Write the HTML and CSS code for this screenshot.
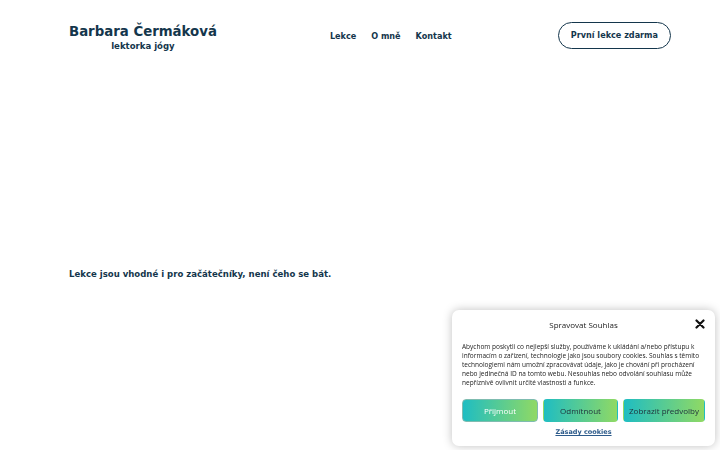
FILE: index.html
```html
<!DOCTYPE html>
<html lang="cs">
<head>
  <meta charset="UTF-8">
  <title>Barbara Čermáková – lektorka jógy</title>
  <link rel="stylesheet" href="styles.css">
</head>
<body>
<div class="page">
  <!-- Header -->
  <header class="header">
    <div class="brand">
      <div class="brand-name">Barbara Čermáková</div>
      <div class="brand-sub">lektorka jógy</div>
    </div>
    <nav class="nav">
      <a href="#">Lekce</a>
      <a href="#">O mně</a>
      <a href="#">Kontakt</a>
    </nav>
    <a href="#" class="cta">První lekce zdarma</a>
  </header>

  <main class="hero">
    <p class="note">Lekce jsou vhodné i pro začátečníky, není čeho se bát.</p>
  </main>
</div>

<!-- Cookie consent -->
<div class="cookie">
  <div class="cookie-head">
    <span class="cookie-title">Spravovat Souhlas</span>
    <span class="cookie-close">
      <svg width="10" height="10" viewBox="0 0 10 10"><path d="M1.5 1.5 L8.5 8.5 M8.5 1.5 L1.5 8.5" stroke="#111" stroke-width="2.2" stroke-linecap="round"/></svg>
    </span>
  </div>
  <p class="cookie-text">Abychom poskytli co nejlepší služby, používáme k ukládání a/nebo přístupu k informacím o zařízení, technologie jako jsou soubory cookies. Souhlas s těmito technologiemi nám umožní zpracovávat údaje, jako je chování při procházení nebo jedinečná ID na tomto webu. Nesouhlas nebo odvolání souhlasu může nepříznivě ovlivnit určité vlastnosti a funkce.</p>
  <div class="cookie-buttons">
    <button class="cbtn accept">Přijmout</button>
    <button class="cbtn">Odmítnout</button>
    <button class="cbtn wide">Zobrazit předvolby</button>
  </div>
  <a href="#" class="cookie-link">Zásady cookies</a>
</div>
</body>
</html>
```

FILE: styles.css
```css
/* Basic styling */
body {
  margin: 0;
  background: #fff;
  font-family: "DejaVu Sans Condensed", "DejaVu Sans", sans-serif;
  font-stretch: condensed;
  color: #14364c;
}
.page {
  width: 602px;
  margin: 0 auto;
  padding: 0 49px 0 69px;
}
.header {
  display: flex;
  align-items: center;
  height: 71px;
}
.brand {
  display: flex;
  flex-direction: column;
  align-items: center;
  white-space: nowrap;
}
.brand-name {
  font-size: 14.8px;
  font-weight: bold;
  line-height: 16px;
  margin-top: 2px;
}
.brand-sub {
  font-size: 9.5px;
  font-weight: bold;
  line-height: 11px;
  margin-top: 1px;
}
.nav {
  display: flex;
  gap: 15px;
  margin-left: 113px;
}
.nav a {
  color: #14364c;
  text-decoration: none;
  font-size: 9px;
  font-weight: bold;
}
.cta {
  margin-left: auto;
  border: 1.5px solid #14364c;
  border-radius: 15px;
  padding: 0 12px;
  height: 25px;
  line-height: 25px;
  font-size: 9px;
  font-weight: bold;
  color: #14364c;
  text-decoration: none;
}
.hero {
  padding-top: 197px;
}
.note {
  margin: 0;
  font-size: 9.5px;
  font-weight: bold;
}
/* Cookie banner */
.cookie {
  position: fixed;
  left: 452px;
  top: 310px;
  width: 263px;
  height: 136px;
  box-sizing: border-box;
  background: #fff;
  border-radius: 7px;
  box-shadow: 0 0 10px rgba(0,0,0,0.25);
  padding: 8px 10px 0 10px;
  font-family: "Open Sans", sans-serif;
  font-stretch: normal;
  color: #222;
}
.cookie-head {
  display: flex;
  align-items: center;
  justify-content: center;
  position: relative;
  height: 12px;
}
.cookie-title {
  font-size: 8px;
}
.cookie-close {
  position: absolute;
  right: 0;
  top: 1px;
  line-height: 0;
}
.cookie-text {
  margin: 12px 0 0 0;
  font-size: 6.5px;
  line-height: 9.1px;
}
.cookie-buttons {
  display: flex;
  gap: 5px;
  margin-top: 12px;
}
.cbtn {
  flex: 0 0 75px;
  height: 23px;
  border: 1px solid transparent;
  border-radius: 4px;
  background: linear-gradient(90deg, #1fbdc2, #90d964);
  font-family: "Open Sans", sans-serif;
  font-size: 8px;
  color: #1e2f3a;
  padding: 0;
}
.cbtn.accept {
  flex-basis: 76px;
  color: #fff;
  border-color: #7fbcb0;
}
.cbtn.wide {
  flex-basis: 82px;
}
.cookie-link {
  display: block;
  text-align: center;
  margin-top: 6px;
  font-family: "DejaVu Sans", sans-serif;
  font-size: 6.5px;
  font-weight: bold;
  color: #2c5a8a;
}
```
